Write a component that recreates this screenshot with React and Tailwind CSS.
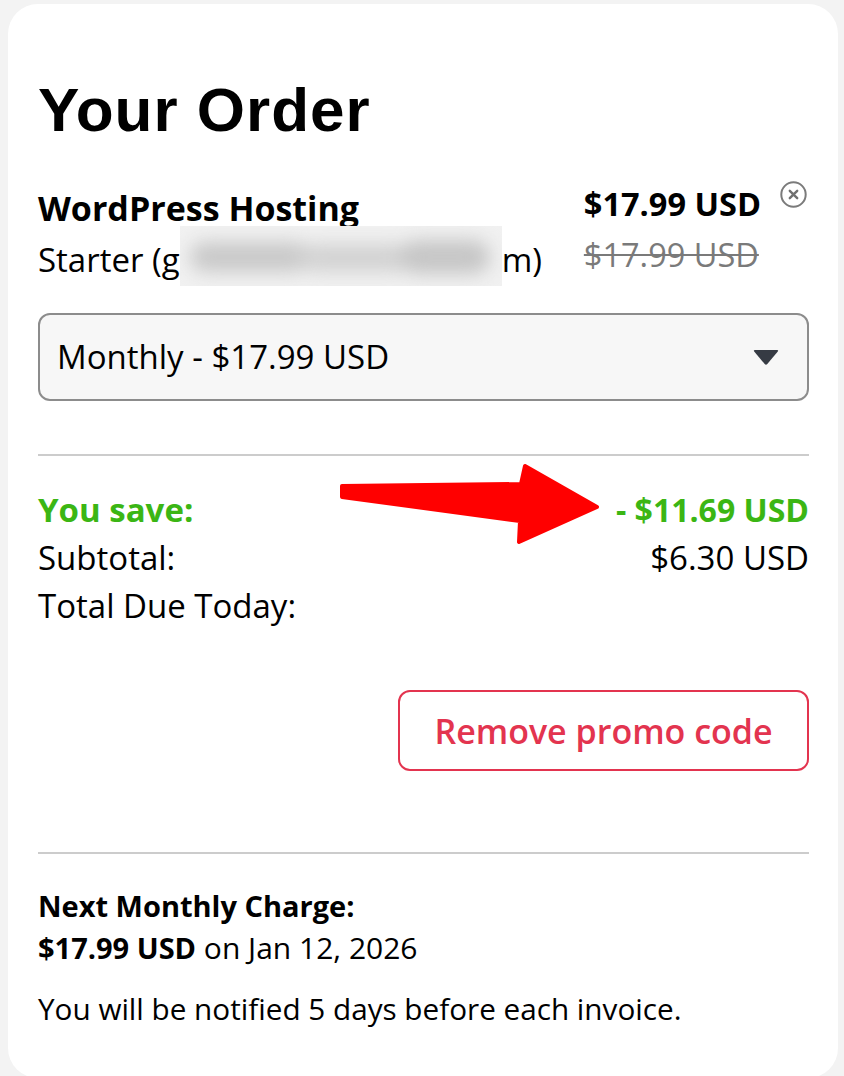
import React from "react";

function CloseIcon() {
  return (
    <svg width="27" height="27" viewBox="0 0 27 27" className="block">
      <circle cx="13.5" cy="13.5" r="12.2" fill="none" stroke="#7b7b7b" strokeWidth="2" />
      <path d="M9.8 9.8 L17.2 17.2 M17.2 9.8 L9.8 17.2" stroke="#6f6f6f" strokeWidth="2.4" strokeLinecap="round" />
    </svg>
  );
}

function Caret() {
  return (
    <svg width="28" height="18" viewBox="0 0 28 18" className="block">
      <path d="M3 2 L25 2 Q27 2 25.6 3.8 L15.3 16 Q14 17.4 12.7 16 L2.4 3.8 Q1 2 3 2 Z" fill="#363b44" />
    </svg>
  );
}

export default function App() {
  return (
    <div className="relative min-h-screen bg-[#f3f3f3] pt-[4px] pl-[8px] font-[family-name:'Open_Sans',sans-serif] text-black">
      <div className="w-[830px] bg-white rounded-[30px] pt-[75px] pb-[48px] pl-[30px] pr-[29px]">
        <h1 className="font-['Liberation_Sans',Arial,sans-serif] font-bold text-[62px] leading-[61px] tracking-[1px]">
          Your Order
        </h1>

        <div className="mt-[42px] flex items-start justify-between">
          <div className="text-[33px] leading-[52px]">
            <div className="font-bold text-[34px]">WordPress Hosting</div>
            <div className="whitespace-nowrap">
              Starter (g
              <span className="relative inline-block w-[322px] h-[52px] align-top">
                <span className="absolute left-0 top-[-8px] w-[322px] h-[60px] overflow-hidden bg-[#f1f1f1]">
                  <span className="absolute inset-0 blur-[9px]">
                    <span className="absolute left-[10px] top-[16px] w-[120px] h-[30px] rounded-full bg-[#c9c9c9]" />
                    <span className="absolute left-[120px] top-[18px] w-[110px] h-[28px] rounded-full bg-[#d2d2d2]" />
                    <span className="absolute left-[220px] top-[14px] w-[90px] h-[34px] rounded-full bg-[#c6c6c6]" />
                  </span>
                </span>
              </span>
              m)
            </div>
          </div>
          <div className="flex items-start gap-[19px] -mt-[4px]">
            <div className="text-[32.5px] leading-[51px]">
              <div className="font-bold">$17.99 USD</div>
              <div className="text-[#7a7a7a] line-through decoration-[2px]">$17.99 USD</div>
            </div>
            <div className="mt-[3px] mr-[2px]">
              <CloseIcon />
            </div>
          </div>
        </div>

        <div className="mt-[27px] h-[88px] rounded-[12px] border-2 border-[#8c8c8c] bg-[#f7f7f7] flex items-center justify-between pl-[17px] pr-[27px]">
          <span className="text-[33px] leading-[40px]">Monthly - $17.99 USD</span>
          <Caret />
        </div>

        <div className="mt-[53px] h-[2px] bg-[#cccccc]" />

        <div className="mt-[30px] text-[33px] leading-[48px]">
          <div className="flex justify-between font-bold text-[#3bb614]">
            <span>You save:</span>
            <span className="text-[32px]">- $11.69 USD</span>
          </div>
          <div className="flex justify-between">
            <span>Subtotal:</span>
            <span>$6.30 USD</span>
          </div>
          <div className="flex justify-between">
            <span>Total Due Today:</span>
          </div>
        </div>

        <div className="mt-[60px] flex justify-end">
          <button className="w-[411px] h-[81px] rounded-[12px] border-2 border-[#e3344f] bg-white text-[#e3344f] font-semibold text-[34px] leading-[40px] flex items-center justify-center">
            Remove promo code
          </button>
        </div>

        <div className="mt-[81px] h-[2px] bg-[#cccccc]" />

        <div className="mt-[31px] text-[30px] leading-[42px]">
          <div className="font-bold text-[29px]">Next Monthly Charge:</div>
          <div>
            <span className="font-bold text-[29px]">$17.99 USD</span> on Jan 12, 2026
          </div>
          <div className="mt-[19px] text-[29.7px]">You will be notified 5 days before each invoice.</div>
        </div>
      </div>

      <svg
        className="absolute left-0 top-0 pointer-events-none"
        width="844"
        height="1076"
        viewBox="0 0 844 1076"
      >
        <polygon
          points="342,486 521,484 525,466 597,507 519,542 520,521 342,497"
          fill="#ff0000"
          stroke="#ff0000"
          strokeWidth="4"
          strokeLinejoin="round"
        />
      </svg>
    </div>
  );
}
